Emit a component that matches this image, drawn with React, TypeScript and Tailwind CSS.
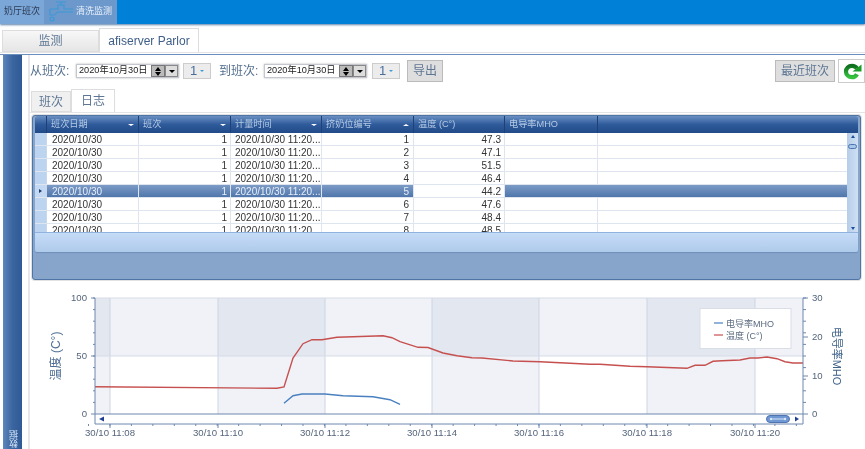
import React from "react";

const rows = [
  ["1", "47.3"],
  ["2", "47.1"],
  ["3", "51.5"],
  ["4", "46.4"],
  ["5", "44.2"],
  ["6", "47.6"],
  ["7", "48.4"],
  ["8", "48.5"],
];

const headers = [
  { label: "班次日期", w: "w-[92px]", sort: "down" },
  { label: "班次", w: "w-[92px]", sort: "down" },
  { label: "计量时间", w: "w-[91px]", sort: "down" },
  { label: "挤奶位编号", w: "w-[92px]", sort: "up" },
  { label: "温度 (C°)", w: "w-[91px]", sort: "" },
  { label: "电导率MHO", w: "w-[93px]", sort: "" },
];

const font = "font-['Liberation_Sans','Noto_Sans_CJK_SC',sans-serif]";

function DatePick() {
  return (
    <div className="flex h-[14px] w-[103px] items-center border border-[#c4c8ce] bg-white pl-[2px] text-[9.2px] text-[#222] shadow-[0_0_2px_#bbb]">
      <span className="flex-1 whitespace-nowrap">2020年10月30日</span>
      <div className="flex h-full w-[14px] flex-col items-center justify-center gap-[1px] border border-[#777] bg-[#bbb]">
        <div className="h-0 w-0 border-x-[3px] border-b-[4px] border-x-transparent border-b-black" />
        <div className="h-0 w-0 border-x-[3px] border-t-[4px] border-x-transparent border-t-black" />
      </div>
      <div className="flex h-full w-[13px] items-center justify-center border border-[#888] bg-[#ddd]">
        <div className="h-0 w-0 border-x-[3px] border-t-[3px] border-x-transparent border-t-black" />
      </div>
    </div>
  );
}

function Shift() {
  return (
    <div className="flex h-[16px] w-[28px] items-center justify-between border border-[#ccc] bg-[#ececec] pl-[6px] pr-[6px] text-[13px] text-[#4a6f9c]">
      <span>1</span>
      <div className="h-0 w-0 border-x-[2px] border-t-[2px] border-x-transparent border-t-[#3f9bd6]" />
    </div>
  );
}

function Grid() {
  return (
    <div className="ml-[2px] mr-[4px] flex h-[165px] flex-col rounded-[3px] border border-[#4f74a6] bg-[#87a5cb] px-[2px] pb-[1px] shadow-[0_0_0_1px_#e2e2e2]">
      <div className="flex h-[17px] shrink-0 rounded-t-[3px] bg-gradient-to-b from-[#6a8fc2] via-[#2f5b9b] to-[#214a88] text-[9.2px] text-[#b4c9e4]">
        <div className="w-[12px] border-r border-[#1e4076]" />
        {headers.map((h) => (
          <div key={h.label} className={`${h.w} flex items-center justify-between border-r border-[#1e4076] pl-[4px] pr-[4px] whitespace-nowrap`}>
            <span>{h.label}</span>
            {h.sort === "down" && <div className="h-0 w-0 border-x-[3px] border-t-[2px] border-x-transparent border-t-white" />}
            {h.sort === "up" && <div className="h-0 w-0 border-x-[3px] border-b-[2px] border-x-transparent border-b-white" />}
          </div>
        ))}
        <div className="flex-1" />
      </div>
      <div className="flex h-[99px] shrink-0 overflow-hidden bg-white">
        <div className="flex-1 overflow-hidden">
          {rows.map((r) => {
            const sel = r[0] === "5";
            return (
              <div key={r[0]} className={`flex h-[13px] shrink-0 items-center border-b border-[#dfe5ee] text-[10px] leading-[14px] ${sel ? "text-[#e8eef7]" : "text-[#333]"}`}>
                <div className={`flex h-full w-[12px] items-center justify-center border-r border-[#c8d8ec] ${sel ? "bg-[#c3d8f2]" : "bg-[#bcd4f0]"}`}>
                  {sel && <div className="h-0 w-0 border-y-[2px] border-l-[3px] border-y-transparent border-l-[#1d3d70]" />}
                </div>
                <div className={`flex h-full items-center ${sel ? "bg-gradient-to-b from-[#7c9bc6] to-[#4f76ab]" : ""}`}>
                  <div className="h-full w-[92px] border-r border-[#dfe5ee] pl-[5px]">2020/10/30</div>
                  <div className="h-full w-[92px] border-r border-[#dfe5ee] pr-[3px] text-right">1</div>
                  <div className="h-full w-[91px] border-r border-[#dfe5ee] pl-[4px] whitespace-nowrap">2020/10/30 11:20...</div>
                  <div className="h-full w-[92px] border-r border-[#dfe5ee] pr-[4px] text-right">{r[0]}</div>
                </div>
                <div className={`h-full w-[91px] border-r border-[#dfe5ee] pr-[3px] text-right ${sel ? "bg-white text-[#333]" : ""}`}>{r[1]}</div>
                <div className={`h-full flex-1 ${sel ? "bg-gradient-to-b from-[#7c9bc6] to-[#4f76ab]" : ""}`}>
                  {!sel && <div className="h-full w-[93px] border-r border-[#dfe5ee]" />}
                </div>
              </div>
            );
          })}
        </div>
        <div className="relative flex w-[11px] shrink-0 flex-col items-center justify-between bg-gradient-to-r from-[#b6cde8] to-[#cfe0f4] py-[2px]">
          <div className="h-0 w-0 border-x-[2px] border-b-[3px] border-x-transparent border-b-[#1d4f9c]" />
          <div className="absolute left-[1px] top-[11px] h-[5px] w-[9px] rounded-full border border-[#4a74ad] bg-[#a9c6e8]" />
          <div className="h-0 w-0 border-x-[2px] border-t-[3px] border-x-transparent border-t-[#1d4f9c]" />
        </div>
      </div>
      <div className="h-[20px] shrink-0 rounded-b-[2px] border-t border-[#8fb3dc] bg-gradient-to-b from-[#c6dcf8] to-[#aecaea] shadow-[0_1px_1px_#6f8fb8]" />
    </div>
  );
}

// 图表范围: x 95-803, y 298-414 (页面坐标)
const bands = [
  [95, 110, true],
  [110, 218, false],
  [218, 325, true],
  [325, 432, false],
  [432, 539, true],
  [539, 647, false],
  [647, 755, true],
  [755, 803, false],
] as const;

const gridX = [110, 218, 325, 432, 539, 647, 755];
const timeLabels = ["30/10 11:08", "30/10 11:10", "30/10 11:12", "30/10 11:14", "30/10 11:16", "30/10 11:18", "30/10 11:20"];

const red =
  "95,386.7 277,388.3 284,387 293,358 303,343.7 312,339.7 322,339.7 337,337.3 353,336.7 383,335.7 392,337.7 400,341.7 418,347.3 428,347.5 443,353 457,355.7 472,357.7 482,358 513,361 540,361.7 590,364.3 600,364.3 630,366.3 647,366.7 687,368.3 695,365.3 705,365.3 713,361.3 722,360.7 740,360 750,358 758,358 767,357 777,358.7 785,361.7 793,363 803,363";
const blue = "284,403.3 293,395.7 302,394 325,394 343,395.7 373,396.7 390,399.7 400,404.3";

function Chart() {
  const minorX: number[] = [];
  for (let x = 88.5; x < 803; x += 21.45) minorX.push(x);
  const minorY: number[] = [];
  for (let y = 298; y <= 414; y += 11.6) minorY.push(y);
  return (
    <svg width="835" height="160" viewBox="30 289 835 160" className="mt-[9px] block">
      {bands.map(([a, b, dark]) => (
        <g key={a}>
          <rect x={a} y={298} width={b - a} height={58} fill={dark ? "#e3e7f0" : "#f0f2f7"} />
          <rect x={a} y={356} width={b - a} height={58} fill={dark ? "#f0f2f7" : "#ffffff"} />
        </g>
      ))}
      {gridX.map((x) => (
        <line key={x} x1={x} x2={x} y1={298} y2={414} stroke="#cdd5e2" strokeWidth="1" />
      ))}
      <line x1={95} x2={803} y1={298} y2={298} stroke="#d5dbe6" />
      <line x1={95} x2={803} y1={356} y2={356} stroke="#d5dbe6" />
      <polyline points={red} fill="none" stroke="#c6504f" strokeWidth="1.4" />
      <polyline points={blue} fill="none" stroke="#4a80c0" strokeWidth="1.4" />

      <g stroke="#6e88ae" strokeWidth="1" fill="none">
        <line x1={95} x2={95} y1={298} y2={424} />
        <line x1={803} x2={803} y1={298} y2={424} />
        <line x1={95} x2={803} y1={414} y2={414} />
        <line x1={95} x2={803} y1={424} y2={424} />
        {[298, 356, 414].map((y) => (
          <line key={y} x1={91} x2={95} y1={y} y2={y} />
        ))}
        {minorY.map((y) => (
          <line key={y} x1={93} x2={95} y1={y} y2={y} />
        ))}
        {[298, 337, 376, 414].map((y) => (
          <line key={y} x1={803} x2={808} y1={y} y2={y} />
        ))}
        {minorY.map((y) => (
          <line key={y} x1={803} x2={806} y1={y} y2={y} />
        ))}
        {gridX.map((x) => (
          <line key={x} x1={x} x2={x} y1={424} y2={428} />
        ))}
        {minorX.map((x) => (
          <line key={x} x1={x} x2={x} y1={424} y2={426} />
        ))}
      </g>

      <g fontFamily="Liberation Sans, Noto Sans CJK SC, sans-serif" fontSize="9.6" fill="#55657c">
        <text x={87} y={301} textAnchor="end">100</text>
        <text x={87} y={359} textAnchor="end">50</text>
        <text x={87} y={417} textAnchor="end">0</text>
        <text x={812} y={301}>30</text>
        <text x={812} y={340}>20</text>
        <text x={812} y={379}>10</text>
        <text x={812} y={417}>0</text>
        {gridX.map((x, i) => (
          <text key={x} x={x} y={436} textAnchor="middle">{timeLabels[i]}</text>
        ))}
        <text x={0} y={0} fontSize="12" fill="#4e6d94" textAnchor="middle" transform="translate(60 356) rotate(-90)">温度 (C°)</text>
        <text x={0} y={0} fontSize="11" fill="#3e6288" textAnchor="middle" transform="translate(833 356) rotate(90)">电导率MHO</text>
      </g>

      <polygon points="99,419 104,416.5 104,421.5" fill="#1f3f95" />
      <polygon points="799,419 795,416.5 795,421.5" fill="#1f3f95" />
      <rect x={766.5} y={415.5} width={23} height={7} rx={3.5} fill="#6f97d3" stroke="#4f74b0" />
      <line x1={772} x2={784} y1={419} y2={419} stroke="#dce7f6" />
      <circle cx={771} cy={419} r={1.2} fill="#dce7f6" />
      <circle cx={785} cy={419} r={1.2} fill="#dce7f6" />

      <rect x={700} y={308.5} width={91} height={40} fill="#ffffff" stroke="#d8dde6" />
      <line x1={714} x2={723} y1={323} y2={323} stroke="#4a80c0" strokeWidth="1.2" />
      <line x1={714} x2={723} y1={335} y2={335} stroke="#c6504f" strokeWidth="1.2" />
      <g fontFamily="Liberation Sans, Noto Sans CJK SC, sans-serif" fontSize="9" fill="#5b6b80">
        <text x={726} y={326.5}>电导率MHO</text>
        <text x={726} y={338.5}>温度 (C°)</text>
      </g>
    </svg>
  );
}

export default function App() {
  return (
    <div className={`${font} h-[449px] w-[865px] overflow-hidden bg-white blur-[0.4px]`}>
      <div className="flex h-[24px] bg-[#0080d6] shadow-[0_1px_2px_#5b7fa8]">
        <div className="flex w-[44px] items-center justify-center bg-[#7ba6d8] text-[9px] text-[#2b3b52]">奶厅班次</div>
        <div className="flex w-[73px] items-center gap-[3px] bg-[#6d98cb] pl-[5px] text-[9px] text-[#e6eef8]">
          <svg width="24" height="22" viewBox="0 0 24 22" fill="none" stroke="#3b9ad6" strokeWidth="1.2">
            <path d="M1 8H9V4H15V8H24M1 8V14H5C7 14 7 11 9 11H24M12 4V1M7 1H17" />
            <circle cx="3" cy="18" r="2" />
          </svg>
          <span className="whitespace-nowrap">清洗监测</span>
        </div>
      </div>

      <div className="flex h-[29px] items-end border-b border-[#e4e4e4] pl-[2px]">
        <div className="flex h-[22px] w-[97px] items-center justify-center border border-[#ddd] bg-gradient-to-b from-[#f7f7f7] to-[#e6e6e6] text-[12px] text-[#5d7694]">监测</div>
        <div className="flex h-[24px] w-[100px] items-center justify-center border border-b-0 border-[#ddd] bg-white text-[12px] text-[#3f5f88]">afiserver Parlor</div>
      </div>

      <div className="mt-[1px] flex h-[395px] border-t border-[#6d8fc0] pl-[3px]">
        <div className="relative w-[19px] shrink-0 bg-gradient-to-r from-[#5f86bd] via-[#3a659f] to-[#2f5a96]">
          <span className="absolute bottom-[1px] left-[5px] rotate-180 text-[9px] text-[#cfe0f4] [writing-mode:vertical-rl]">数据</span>
        </div>
        <div className="ml-[6px] min-w-0 flex-1 border-l-2 border-[#e8e8e8]">
          <div className="flex h-[34px] items-center pb-[2px] text-[12px] text-[#55708f]">
            <span className="w-[46px] whitespace-nowrap">从班次:</span>
            <DatePick />
            <div className="w-[4px]" />
            <Shift />
            <span className="ml-[8px] w-[45px] whitespace-nowrap">到班次:</span>
            <DatePick />
            <div className="w-[5px]" />
            <Shift />
            <button className="ml-[7px] h-[22px] w-[36px] border border-[#bbb] bg-[#dedede] text-[12px] text-[#5d7694]">导出</button>
            <div className="flex-1" />
            <button className="h-[22px] w-[60px] border border-[#bbb] bg-[#dedede] text-[12px] text-[#5d7694]">最近班次</button>
            <div className="ml-[3px] flex h-[24px] w-[27px] items-center justify-center border border-[#ccc] bg-white">
              <svg width="20" height="17" viewBox="0 0 20 17" fill="none">
                <defs>
                  <linearGradient id="g" x1="0" y1="0" x2="0" y2="1">
                    <stop offset="0" stopColor="#0f6f1f" />
                    <stop offset="1" stopColor="#35c23f" />
                  </linearGradient>
                </defs>
                <path d="M15 5.500C13.800 3.500 12 2.800 10 2.800 6.500 2.800 4 5.200 4 8.500s2.500 5.700 6 5.700c2.200 0 4-1 5-3" stroke="url(#g)" strokeWidth="4.200" />
                <polygon points="10.500,8.500 19.500,8.500 19.500,1.500" fill="#1c9a2a" />
              </svg>
            </div>
          </div>

          <div className="flex h-[23px] items-end pl-[1px] text-[12px] text-[#5d7694]">
            <div className="flex h-[21px] w-[40px] items-center justify-center border border-[#ddd] bg-[#f0f0f0]">班次</div>
            <div className="flex h-[23px] w-[44px] items-center justify-center border border-b-0 border-[#ddd] bg-white">日志</div>
          </div>
          <div className="h-[3px] border-t border-[#e4e4e4]" />

          <Grid />
          <Chart />
        </div>
      </div>
    </div>
  );
}
